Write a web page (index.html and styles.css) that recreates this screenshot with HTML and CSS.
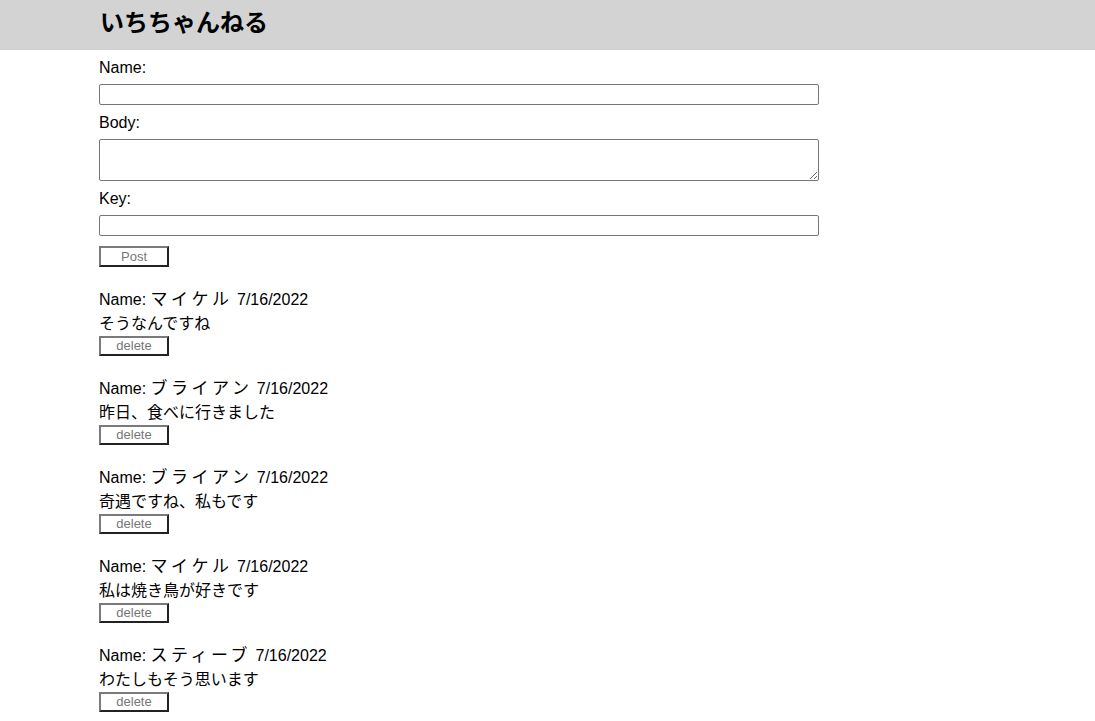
FILE: index.html
```html
<!DOCTYPE html>
<html lang="ja">
<head>
<meta charset="utf-8">
<title>いちちゃんねる</title>
<link rel="stylesheet" href="styles.css">
</head>
<body>
<header class="site-header">
  <h1 class="site-title">いちちゃんねる</h1>
</header>
<main class="content">
  <form class="post-form">
    <label class="field-label" for="name">Name:</label>
    <input class="text-input" id="name" type="text">
    <label class="field-label" for="body">Body:</label>
    <textarea class="text-area" id="body"></textarea>
    <label class="field-label" for="key">Key:</label>
    <input class="text-input" id="key" type="text">
    <button class="btn btn-post" type="button">Post</button>
  </form>
  <section class="posts">
    <article class="post">
      <div class="post-meta">Name: <span class="post-name">マイケル</span> 7/16/2022</div>
      <div class="post-body">そうなんですね</div>
      <button class="btn" type="button">delete</button>
    </article>
    <article class="post">
      <div class="post-meta">Name: <span class="post-name">ブライアン</span> 7/16/2022</div>
      <div class="post-body">昨日、食べに行きました</div>
      <button class="btn" type="button">delete</button>
    </article>
    <article class="post">
      <div class="post-meta">Name: <span class="post-name">ブライアン</span> 7/16/2022</div>
      <div class="post-body">奇遇ですね、私もです</div>
      <button class="btn" type="button">delete</button>
    </article>
    <article class="post">
      <div class="post-meta">Name: <span class="post-name">マイケル</span> 7/16/2022</div>
      <div class="post-body">私は焼き鳥が好きです</div>
      <button class="btn" type="button">delete</button>
    </article>
    <article class="post">
      <div class="post-meta">Name: <span class="post-name">スティーブ</span> 7/16/2022</div>
      <div class="post-body">わたしもそう思います</div>
      <button class="btn" type="button">delete</button>
    </article>
  </section>
</main>
</body>
</html>
```
FILE: styles.css
```css
html, body {
  margin: 0;
  padding: 0;
  background: #ffffff;
}
body {
  font-family: "Liberation Sans", "Noto Sans CJK JP", sans-serif;
  font-size: 16px;
  color: #000;
}
.site-header {
  background: #d3d3d3;
  height: 50px;
  padding-left: 99px;
  display: flex;
  align-items: center;
}
.site-title {
  margin: 0;
  font-size: 24px;
  font-weight: bold;
  line-height: 1;
  transform: translateY(-2px);
  padding-left: 1px;
}
.content {
  padding-left: 99px;
}
.post-form {
  display: flex;
  flex-direction: column;
  align-items: flex-start;
}
.field-label {
  display: block;
  line-height: 18px;
  padding: 9px 0 7px;
}
.text-input, .text-area {
  box-sizing: border-box;
  width: 720px;
  margin: 0;
  border: 1px solid #767676;
  border-radius: 2px;
  font-family: inherit;
  font-size: 13px;
  background: #fff;
}
.text-input {
  height: 21px;
}
.text-area {
  height: 42px;
  resize: vertical;
}
.btn {
  box-sizing: border-box;
  width: 70px;
  height: 20px;
  padding: 0;
  margin: 0;
  background: #fff;
  border: 2px solid #5a5a5a;
  border-top-color: #7a7a7a;
  border-left-color: #7a7a7a;
  border-right-color: #222;
  border-bottom-color: #222;
  color: #777;
  font-family: "Liberation Sans", sans-serif;
  font-size: 13px;
  line-height: 16px;
}
.btn-post {
  margin-top: 10px;
  height: 21px;
}
.posts {
  display: flex;
  flex-direction: column;
}
.post {
  margin-top: 20px;
  display: flex;
  flex-direction: column;
  align-items: flex-start;
}
.post-meta, .post-body {
  line-height: 24px;
  height: 24px;
}
.post-meta {
  padding-top: 1px;
}
.post-name {
  font-size: 17px;
  letter-spacing: 3.5px;
  line-height: 1;
}
```
